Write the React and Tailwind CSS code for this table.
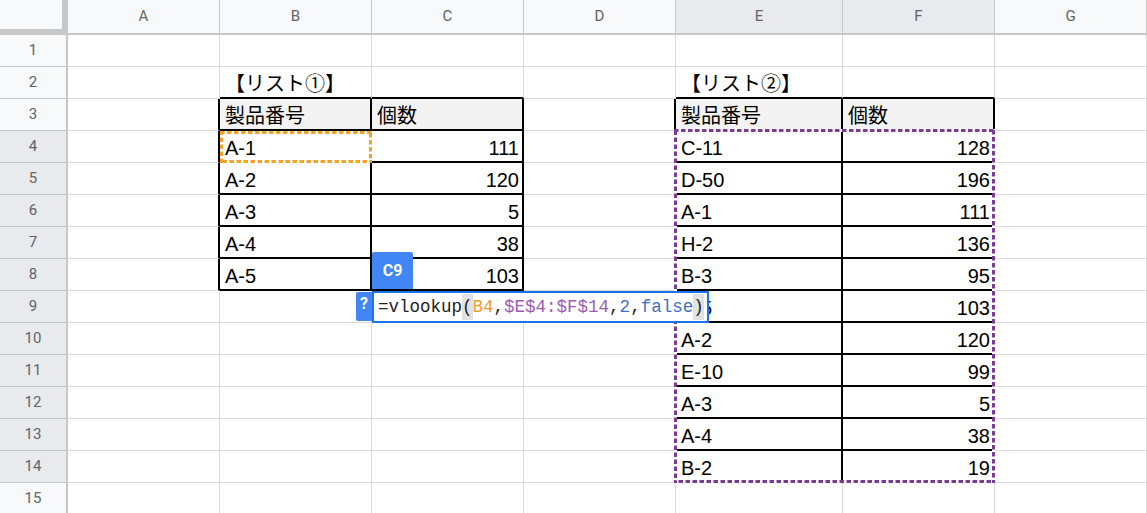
import clsx from "clsx";

const columns = ["A", "B", "C", "D", "E", "F", "G"];
const selectedCols = ["E", "F"];

const rowStart = [
  "row-start-1", "row-start-2", "row-start-3", "row-start-4", "row-start-5", "row-start-6",
  "row-start-7", "row-start-8", "row-start-9", "row-start-10", "row-start-11", "row-start-12",
  "row-start-13", "row-start-14", "row-start-15", "row-start-16",
];
const colStart = [
  "col-start-1", "col-start-2", "col-start-3", "col-start-4",
  "col-start-5", "col-start-6", "col-start-7", "col-start-8",
];

const listOne = [
  ["A-1", 111],
  ["A-2", 120],
  ["A-3", 5],
  ["A-4", 38],
  ["A-5", 103],
];

const listTwo = [
  ["C-11", 128],
  ["D-50", 196],
  ["A-1", 111],
  ["H-2", 136],
  ["B-3", 95],
  ["A-5", 103],
  ["A-2", 120],
  ["E-10", 99],
  ["A-3", 5],
  ["A-4", 38],
  ["B-2", 19],
];

const cells = {
  B2: "【リスト①】",
  E2: "【リスト②】",
  B3: "製品番号",
  C3: "個数",
  E3: "製品番号",
  F3: "個数",
};
listOne.forEach(([code, qty], i) => {
  cells[`B${i + 4}`] = code;
  cells[`C${i + 4}`] = qty;
});
listTwo.forEach(([code, qty], i) => {
  cells[`E${i + 4}`] = code;
  cells[`F${i + 4}`] = qty;
});

const headerCells = ["B3", "C3", "E3", "F3"];

// black table edges: the right edge of a cell, the bottom edge of a cell
function hasBlackRight(col, row) {
  if (["A", "B", "C"].includes(col) && row >= 3 && row <= 8) return true;
  if (["D", "E", "F"].includes(col) && row >= 3 && row <= 14) return true;
  return false;
}

function hasBlackBottom(col, row) {
  if (["B", "C"].includes(col) && row >= 2 && row <= 8) return true;
  if (["E", "F"].includes(col) && row >= 2 && row <= 14) return true;
  return false;
}

const cellFont = { fontFamily: '"Liberation Sans", "Noto Sans CJK JP", sans-serif' };

function Cell({ col, row, colIndex }) {
  const id = `${col}${row}`;
  const value = cells[id];
  const isNumber = typeof value === "number";
  return (
    <div
      className={clsx(
        "flex items-end overflow-visible whitespace-nowrap pb-[3px] text-[20px] leading-none text-black",
        rowStart[row],
        colStart[colIndex + 1],
        hasBlackRight(col, row) ? "border-r-2 border-r-black" : "border-r border-r-[#dadada]",
        hasBlackBottom(col, row) ? "border-b-2 border-b-black" : "border-b border-b-[#dadada]",
        headerCells.includes(id) ? "bg-[#f3f3f3]" : "bg-white",
        isNumber ? "justify-end pr-[3px]" : "justify-start pl-[5px]"
      )}
      style={cellFont}
    >
      {value}
    </div>
  );
}

// dashed "marching ants" frame drawn over a range
function RangeMark({ className, color }) {
  return (
    <div className={clsx("pointer-events-none", className)}>
      <svg className="block h-full w-full">
        <rect x="0" y="0" width="100%" height="100%" fill="none" stroke="#ffffff" strokeWidth="6" />
        <rect
          x="0"
          y="0"
          width="100%"
          height="100%"
          fill="none"
          stroke={color}
          strokeWidth="6"
          strokeDasharray="4.5 2.5"
        />
      </svg>
    </div>
  );
}

function FormulaEditor() {
  return (
    <div
      className="relative z-20 col-start-4 row-start-10"
      style={{ fontFamily: "Roboto, sans-serif" }}
    >
      <div className="absolute bottom-full left-0 mb-[2px] flex h-[37px] w-[41px] items-center justify-center rounded-t-[2px] bg-[#4285f4] text-[16px] font-bold text-white">
        C9
      </div>
      <div className="absolute right-full top-[1px] flex h-[29px] w-[16px] justify-center rounded-l-[2px] bg-[#4285f4] pt-[4px] text-[16px] font-bold leading-none text-white">
        ?
      </div>
      <div
        className="flex h-full w-max items-center border-2 border-[#1a73e8] bg-white pl-1 pr-[3px] text-[17.5px] text-[#222]"
        style={{ fontFamily: '"Liberation Mono", "DejaVu Sans Mono", monospace' }}
      >
        <span>=vlookup</span>
        <span className="bg-[#e2e2e2]">(</span>
        <span className="text-[#f09b2c]">B4</span>
        <span>,</span>
        <span className="text-[#9e5bb5]">$E$4:$F$14</span>
        <span>,</span>
        <span className="text-[#3f6fc4]">2</span>
        <span>,</span>
        <span className="text-[#3f6fc4]">false</span>
        <span className="bg-[#e2e2e2]">)</span>
      </div>
    </div>
  );
}

export default function App() {
  const rows = Array.from({ length: 15 }, (_, i) => i + 1);
  return (
    <div className="h-[513px] w-[1147px] overflow-hidden bg-white">
      <div className="grid grid-cols-[68px_152px_152px_152px_152px_167px_152px_152px] grid-rows-[35px_repeat(15,32px)]">
        <div className="col-start-1 row-start-1 border-b-[6px] border-r-[6px] border-[#c7c7c7] bg-[#f8f9fa]" />
        {columns.map((col, i) => (
          <div
            key={col}
            className={clsx(
              "row-start-1 flex items-center justify-center border-b-2 border-r border-[#c7c7c7] text-[15px] text-[#5f6368]",
              colStart[i + 1],
              selectedCols.includes(col) ? "bg-[#e8eaed]" : "bg-[#f8f9fa]"
            )}
            style={{ fontFamily: "Roboto, sans-serif" }}
          >
            {col}
          </div>
        ))}

        {rows.map((row) => (
          <div key={`r${row}`} className="contents">
            <div
              className={clsx(
                "col-start-1 flex items-center justify-center border-b border-r-2 border-[#c7c7c7] text-[15px] text-[#5f6368]",
                rowStart[row],
                row >= 4 && row <= 14 ? "bg-[#e8eaed]" : "bg-[#f8f9fa]"
              )}
              style={{ fontFamily: "Roboto, sans-serif" }}
            >
              {row}
            </div>
            {columns.map((col, i) => (
              <Cell key={`${col}${row}`} col={col} row={row} colIndex={i} />
            ))}
          </div>
        ))}

        {/* copy range marks: B4 and E4:F14 */}
        <RangeMark className="col-start-3 row-start-5" color="#f4a329" />
        <RangeMark
          className="col-start-6 col-end-8 row-start-5 row-end-16 -ml-[2px] -mt-[2px]"
          color="#7b3a96"
        />

        <FormulaEditor />
      </div>
    </div>
  );
}
